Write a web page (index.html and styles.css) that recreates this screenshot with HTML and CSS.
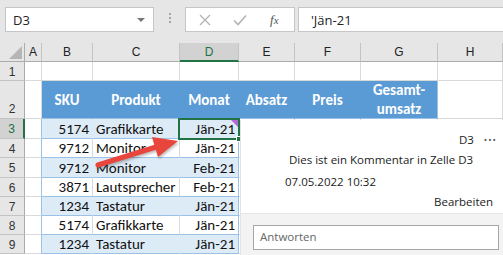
FILE: index.html
```html
<html>
	<head>
		<meta charset="utf-8">
		<link rel="stylesheet" href="styles.css">
	</head>
	<body>
		<div class="bar">
			<div class="namebox"><span>D3</span><span class="drop"></span></div>
			<div class="grip"><i></i><i></i><i></i></div>
			<div class="btns">
				<svg class="ico" width="12" height="12" viewBox="0 0 12 12"><path d="M1 1L11 11M11 1L1 11" stroke="#b3b3b3" stroke-width="1.3" fill="none"/></svg>
				<svg class="ico" width="14" height="12" viewBox="0 0 14 12"><path d="M1 6.5L5 10.5L13 1.5" stroke="#b3b3b3" stroke-width="1.6" fill="none"/></svg>
				<span class="fx">f<small>x</small></span>
			</div>
			<div class="formula">'Jän-21</div>
		</div>

		<div class="sheet">
			<div class="hd corner"><span class="tri"></span></div>
			<div class="hd">A</div>
			<div class="hd">B</div>
			<div class="hd">C</div>
			<div class="hd sel">D</div>
			<div class="hd">E</div>
			<div class="hd">F</div>
			<div class="hd">G</div>
			<div class="hd">H</div>

			<div class="rh">1</div>
			<div class="c"></div><div class="c"></div><div class="c"></div><div class="c"></div><div class="c"></div><div class="c"></div><div class="c"></div><div class="c"></div>

			<div class="rh">2</div>
			<div class="c"></div>
			<div class="c th">SKU</div>
			<div class="c th">Produkt</div>
			<div class="c th">Monat</div>
			<div class="c th">Absatz</div>
			<div class="c th">Preis</div>
			<div class="c th">Gesamt-<br>umsatz</div>
			<div class="c"></div>

			<div class="rh rsel">3</div>
			<div class="c edge"></div>
			<div class="c band num">5174</div><div class="c band">Grafikkarte</div><div class="c band num last">Jän-21</div>
			<div class="c"></div><div class="c"></div><div class="c"></div><div class="c"></div>

			<div class="rh">4</div>
			<div class="c edge"></div>
			<div class="c plain num">9712</div><div class="c plain">Monitor</div><div class="c plain num last">Jän-21</div>
			<div class="c"></div><div class="c"></div><div class="c"></div><div class="c"></div>

			<div class="rh">5</div>
			<div class="c edge"></div>
			<div class="c band num">9712</div><div class="c band">Monitor</div><div class="c band num last">Feb-21</div>
			<div class="c"></div><div class="c"></div><div class="c"></div><div class="c"></div>

			<div class="rh">6</div>
			<div class="c edge"></div>
			<div class="c plain num">3871</div><div class="c plain">Lautsprecher</div><div class="c plain num last">Feb-21</div>
			<div class="c"></div><div class="c"></div><div class="c"></div><div class="c"></div>

			<div class="rh">7</div>
			<div class="c edge"></div>
			<div class="c band num">1234</div><div class="c band">Tastatur</div><div class="c band num last">Jän-21</div>
			<div class="c"></div><div class="c"></div><div class="c"></div><div class="c"></div>

			<div class="rh">8</div>
			<div class="c edge"></div>
			<div class="c plain num">5174</div><div class="c plain">Grafikkarte</div><div class="c plain num last">Jän-21</div>
			<div class="c"></div><div class="c"></div><div class="c"></div><div class="c"></div>

			<div class="rh">9</div>
			<div class="c edge"></div>
			<div class="c band num">1234</div><div class="c band">Tastatur</div><div class="c band num last">Jän-21</div>
			<div class="c"></div><div class="c"></div><div class="c"></div><div class="c"></div>

			<div class="cursor"><span class="note"></span><span class="handle"></span></div>

			<svg class="arrow" width="110" height="50" viewBox="0 0 110 50">
				<path d="M4 44L62 26" stroke="#e8453c" stroke-width="5" stroke-linecap="round" fill="none"/>
				<path d="M58 16L84 20L64 36Z" fill="#e8453c"/>
			</svg>

			<div class="pane">
				<div class="who"><span>D3</span><span class="more">•••</span></div>
				<div class="text">Dies ist ein Kommentar in Zelle D3</div>
				<div class="date">07.05.2022 10:32</div>
				<div class="edit">Bearbeiten</div>
				<div class="foot"><div class="reply">Antworten</div></div>
			</div>
		</div>
	</body>
</html>
```

FILE: styles.css
```css
*{
	margin: 0;
	padding: 0;
	box-sizing: border-box;
}
body{
	width: 503px;
	height: 255px;
	overflow: hidden;
	background: #fff;
	font-family: "Carlito", "Liberation Sans", sans-serif;
}

/* formula bar */
.bar{
	display: flex;
	align-items: flex-start;
	height: 43px;
	padding: 7px 0 0 5px;
	background: #e6e6e6;
}
.namebox{
	display: flex;
	align-items: center;
	justify-content: space-between;
	width: 149px;
	height: 25px;
	padding: 0 8px 0 7px;
	background: #fff;
	border: 1px solid #c6c6c6;
	font-family: "Open Sans", sans-serif;
	font-size: 13px;
	color: #222;
}
.drop{
	border-left: 4px solid transparent;
	border-right: 4px solid transparent;
	border-top: 4px solid #777;
}
.grip{
	display: flex;
	flex-direction: column;
	gap: 2px;
	width: 31px;
	align-items: center;
	padding-top: 6px;
}
.grip i{
	width: 2px;
	height: 2px;
	background: #a6a6a6;
}
.btns{
	display: flex;
	align-items: center;
	width: 110px;
	height: 25px;
	padding-left: 13px;
	gap: 22px;
	background: #fff;
	border: 1px solid #c6c6c6;
}
.fx{
	font-family: "Liberation Serif", serif;
	font-style: italic;
	font-size: 13px;
	color: #555;
	margin-left: 1px;
}
.fx small{
	font-size: 11px;
}
.formula{
	flex: 1;
	height: 25px;
	margin-left: 3px;
	padding: 3px 0 0 12px;
	background: #fff;
	border: 1px solid #c6c6c6;
	border-right: 0;
	font-family: "Open Sans", sans-serif;
	font-size: 13px;
	color: #222;
}

/* grid */
.sheet{
	position: relative;
	display: grid;
	grid-template-columns: 25px 17px 51px 87px 59px 56px 66px 77px 1fr;
	grid-template-rows: 19px 19px 38px 20px 19px 20px 19px 19px 19px 19px;
}
.hd{
	display: flex;
	align-items: center;
	justify-content: center;
	background: #e6e6e6;
	border-right: 1px solid #c3c3c3;
	border-bottom: 1px solid #ababab;
	font-family: "Liberation Sans", sans-serif;
	font-size: 12px;
	color: #222;
}
.hd.corner{
	position: relative;
	border-right-color: #ababab;
}
.tri{
	position: absolute;
	right: 2px;
	bottom: 2px;
	border-left: 13px solid transparent;
	border-bottom: 13px solid #b5b5b5;
}
.hd.sel{
	background: #d2d2d2;
	color: #217346;
	border-bottom: 2px solid #217346;
}
.rh{
	display: flex;
	align-items: center;
	justify-content: center;
	padding-top: 1px;
	background: #e6e6e6;
	border-right: 1px solid #ababab;
	border-bottom: 1px solid #c3c3c3;
	font-family: "Liberation Sans", sans-serif;
	font-size: 12px;
	color: #333;
}
.rh:nth-child(19){
	align-items: flex-end;
	padding-bottom: 2px;
}
.rh.rsel{
	background: #d2d2d2;
	color: #217346;
	border-right: 2px solid #217346;
}
.c{
	display: flex;
	align-items: flex-end;
	padding: 0 3px 0;
	border-right: 1px solid #d9d9d9;
	border-bottom: 1px solid #d9d9d9;
	font-size: 15px;
	color: #111;
	white-space: nowrap;
}
.c.edge{
	border-right-color: #9bc2e6;
}
.th{
	align-items: center;
	justify-content: center;
	text-align: center;
	line-height: 19px;
	padding: 1px 0 0;
	background: #5b9bd5;
	border-right-color: #5b9bd5;
	border-bottom-color: #9bc2e6;
	color: #fff;
	font-weight: bold;
	font-size: 15px;
	white-space: normal;
}
.th:nth-child(26){
	border-right-color: #9bc2e6;
}
.band{
	background: #ddebf7;
	border-right-color: #ddebf7;
	border-bottom-color: #9bc2e6;
}
.plain{
	border-bottom-color: #9bc2e6;
}
.num{
	justify-content: flex-end;
}
.c.last{
	border-right-color: #9bc2e6;
}

/* overlays */
.cursor{
	position: absolute;
	left: 178px;
	top: 75px;
	width: 62px;
	height: 22px;
	border: 2px solid #217346;
}
.note{
	position: absolute;
	right: 0;
	top: 0;
	border-left: 7px solid transparent;
	border-top: 7px solid #b665d6;
}
.handle{
	position: absolute;
	right: -4px;
	bottom: -4px;
	width: 6px;
	height: 6px;
	background: #217346;
	border: 1px solid #fff;
}
.arrow{
	position: absolute;
	left: 94px;
	top: 78px;
	filter: drop-shadow(1px 2px 1px rgba(0,0,0,0.25));
}
.pane{
	position: absolute;
	left: 240px;
	top: 77px;
	width: 263px;
	height: 135px;
	display: flex;
	flex-direction: column;
	background: #fff;
	border-left: 1px solid #e3e3e3;
	font-family: "Open Sans", sans-serif;
	font-size: 11.5px;
	color: #222;
}
.who{
	display: flex;
	justify-content: flex-end;
	align-items: center;
	gap: 10px;
	height: 30px;
	padding: 8px 6px 0 0;
}
.more{
	font-size: 9px;
	letter-spacing: 1px;
	color: #555;
}
.text{
	height: 20px;
	padding-left: 48px;
	line-height: 20px;
}
.date{
	height: 22px;
	padding-left: 44px;
	line-height: 24px;
}
.edit{
	height: 20px;
	text-align: right;
	padding-right: 10px;
	line-height: 20px;
}
.foot{
	flex: 1;
	margin-top: 1px;
	padding: 11px 4px 0 12px;
	background: #f3f3f3;
	border-top: 1px solid #e6e6e6;
}
.reply{
	height: 25px;
	padding: 3px 0 0 6px;
	background: #fff;
	border: 1px solid #a6a6a6;
	color: #666;
}
```
